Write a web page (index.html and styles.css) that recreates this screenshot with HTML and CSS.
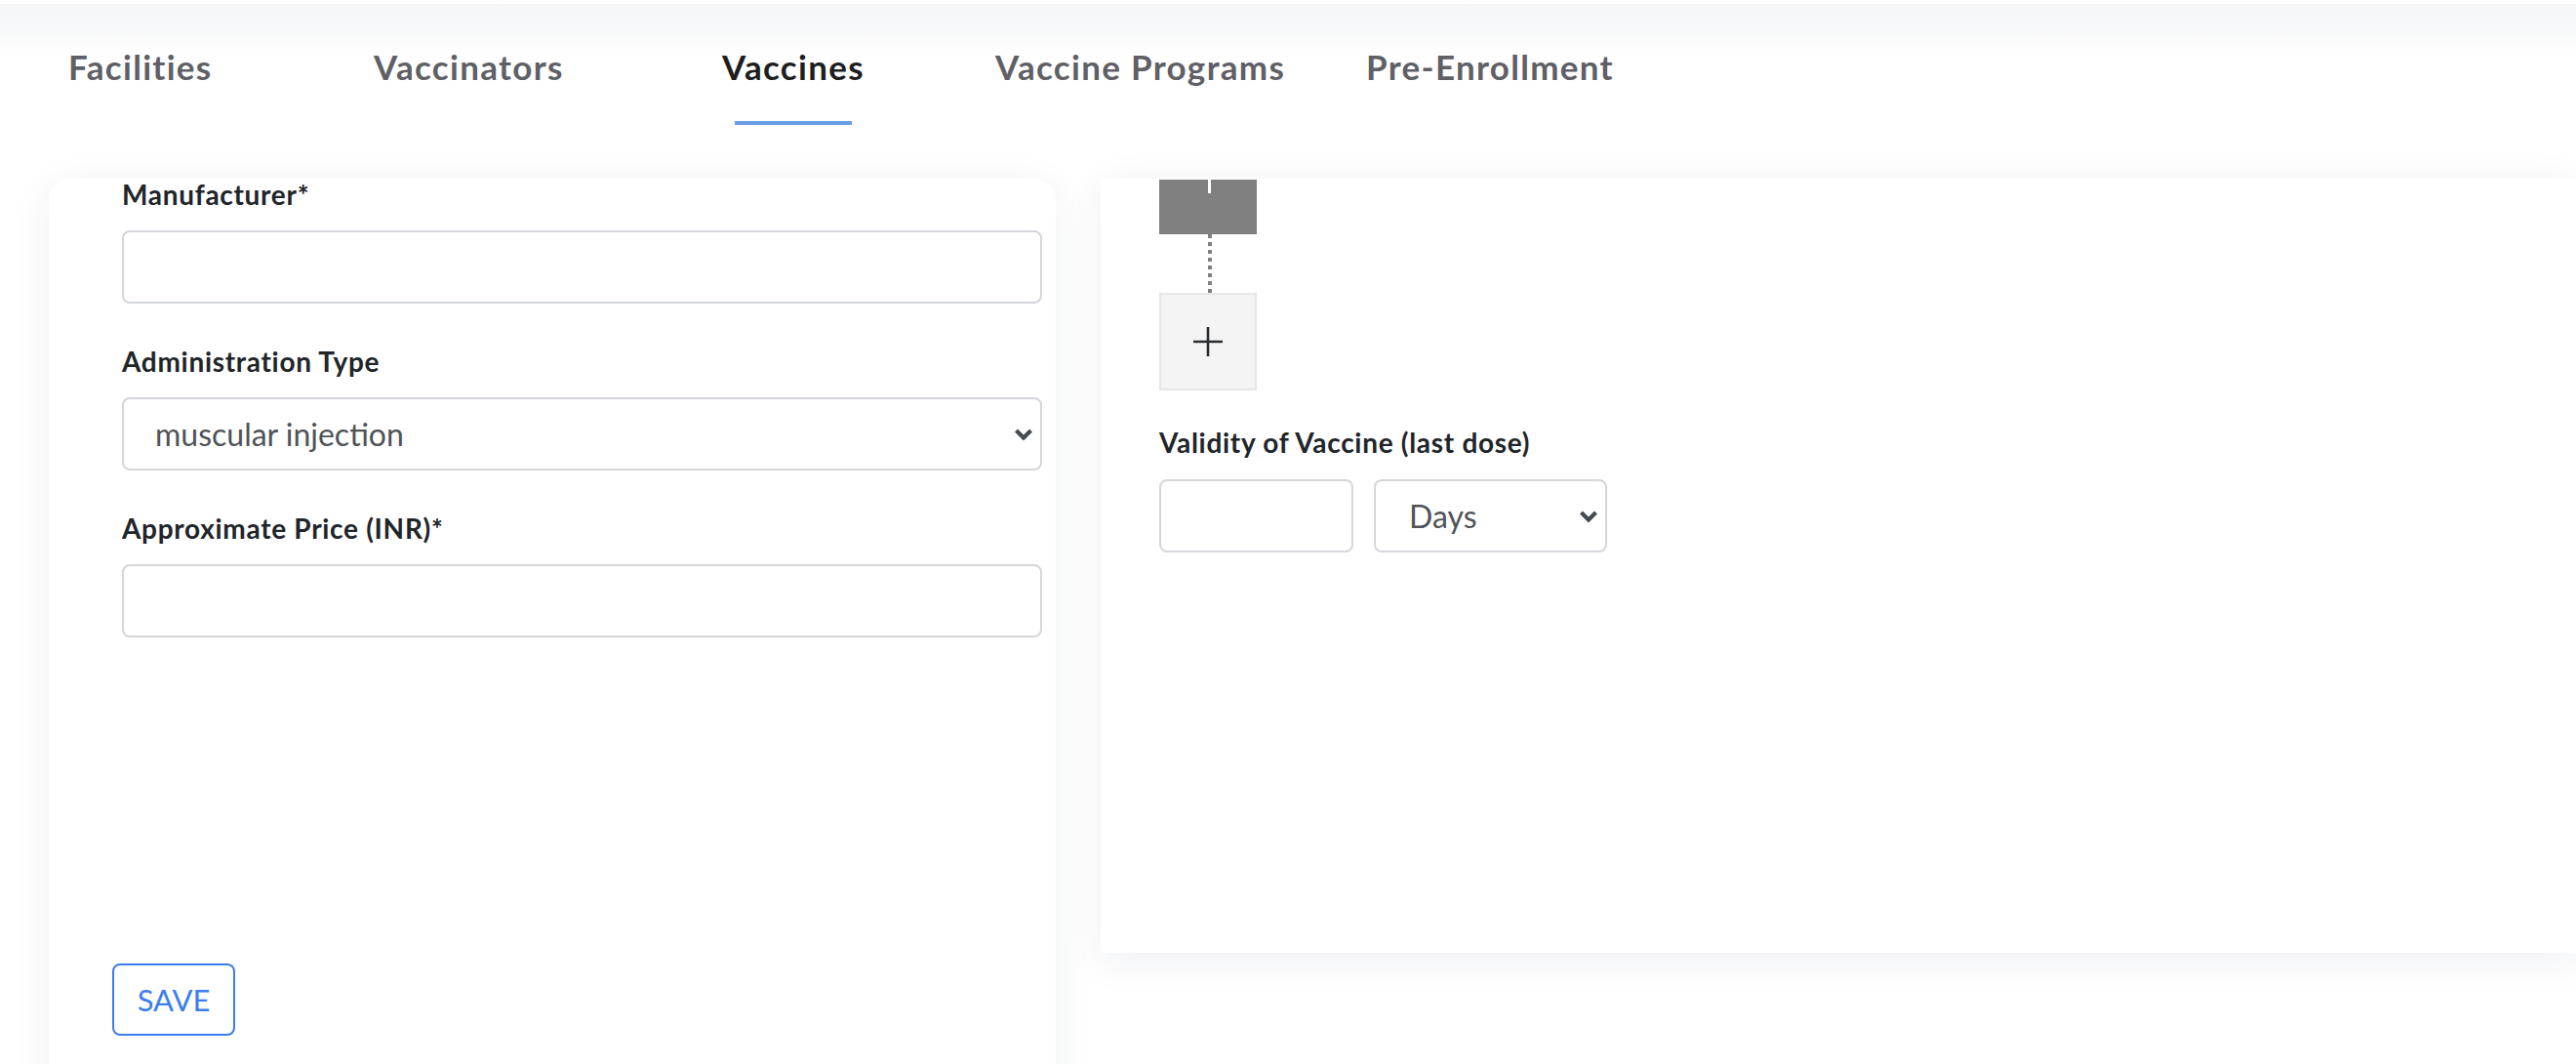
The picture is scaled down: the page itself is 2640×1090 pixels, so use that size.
FILE: index.html
```html
<!DOCTYPE html>
<html lang="en">
<head>
<meta charset="utf-8">
<title>Vaccines</title>
<link rel="stylesheet" href="styles.css">
</head>
<body>
<header class="topbar">
  <nav class="tabs">
    <a class="tab" href="#">Facilities</a>
    <a class="tab" href="#">Vaccinators</a>
    <a class="tab active" href="#">Vaccines</a>
    <a class="tab" href="#">Vaccine Programs</a>
    <a class="tab" href="#">Pre-Enrollment</a>
  </nav>
</header>
<main class="workspace">
  <section class="card form-card">
    <div class="field">
      <label class="field-label" for="manufacturer">Manufacturer*</label>
      <input class="control" id="manufacturer" type="text">
    </div>
    <div class="field">
      <label class="field-label" for="admin-type">Administration Type</label>
      <div class="select-wrap">
        <select class="control select" id="admin-type">
          <option>muscular injection</option>
        </select>
        <svg class="chevron" width="20" height="13" viewBox="0 0 20 13"><polyline points="2.5,2.5 10,10 17.5,2.5" fill="none" stroke="#454b52" stroke-width="4.2"/></svg>
      </div>
    </div>
    <div class="field">
      <label class="field-label" for="price">Approximate Price (INR)*</label>
      <input class="control" id="price" type="text">
    </div>
    <button class="save-btn" type="button">SAVE</button>
  </section>
  <section class="card dose-card">
    <div class="dose-track">
      <div class="dose-node"></div>
      <div class="dose-link"></div>
      <button class="dose-add" type="button" aria-label="Add dose">
        <svg width="32" height="32" viewBox="0 0 32 32"><path d="M16 1v30M1 16h30" stroke="#2a2c30" stroke-width="2.6" fill="none"/></svg>
      </button>
    </div>
    <div class="field validity">
      <label class="field-label" for="validity">Validity of Vaccine (last dose)</label>
      <div class="validity-row">
        <input class="control num-input" id="validity" type="text">
        <div class="select-wrap unit-wrap">
          <select class="control select unit-select">
            <option>Days</option>
          </select>
          <svg class="chevron" width="20" height="13" viewBox="0 0 20 13"><polyline points="2.5,2.5 10,10 17.5,2.5" fill="none" stroke="#454b52" stroke-width="4.2"/></svg>
        </div>
      </div>
    </div>
  </section>
</main>
</body>
</html>
```
FILE: styles.css
```css
html, body {
  margin: 0;
  padding: 0;
}

body {
  font-family: Lato, "Open Sans", Arial, sans-serif;
  font-variant-ligatures: none;
  color: #212529;
  background: #ffffff;
  overflow: hidden;
}

/* ---------- top navigation ---------- */
.topbar {
  height: 183px;
  box-sizing: border-box;
  padding: 47px 0 0 70px;
  background: linear-gradient(to bottom, #ffffff 0, #ffffff 4px, #f5f6f8 4px, #f8f9fa 30px, #fdfdfd 48px, #ffffff 64px);
}

.tabs {
  display: grid;
  grid-template-columns: 313px 357px 280px 380px auto;
  justify-items: start;
}

.tab {
  display: flex;
  flex-direction: column;
  align-items: center;
  font-size: 35px;
  font-weight: 700;
  line-height: 42px;
  letter-spacing: 1.3px;
  color: #5f6066;
  text-decoration: none;
}

.tab::after {
  content: "";
  width: 120px;
  height: 4px;
  margin-top: 35px;
}

.tab.active {
  color: #1d1e22;
}

.tab.active::after {
  background: #6b9ce9;
}

/* ---------- cards ---------- */
.workspace {
  display: flex;
  align-items: flex-start;
  gap: 46px;
  padding-left: 50px;
}

.card {
  background: #ffffff;
  box-shadow: 0 8px 40px rgba(30, 45, 80, 0.07);
  box-sizing: border-box;
}

.form-card {
  width: 1032px;
  height: 960px;
  flex: none;
  padding: 0 14px 0 65px;
  border-radius: 22px 22px 0 0;
}

.dose-card {
  flex: 1;
  height: 793px;
  padding: 1px 0 0 60px;
}

/* ---------- fields ---------- */
.field {
  margin: 0 0 43px 10px;
}

.field-label {
  display: block;
  font-size: 28px;
  font-weight: 700;
  line-height: 32px;
  letter-spacing: 0.7px;
  margin-bottom: 21px;
  color: #212529;
}

.control {
  display: block;
  width: 100%;
  height: 75px;
  box-sizing: border-box;
  border: 2px solid #d3d6da;
  border-radius: 8px;
  background: #ffffff;
  font-family: Lato, "Open Sans", Arial, sans-serif;
  font-size: 32px;
  font-weight: 400;
  color: #505357;
  padding: 0 32px;
  outline: none;
}

.select {
  appearance: none;
  -webkit-appearance: none;
}

.select-wrap {
  position: relative;
}

.chevron {
  position: absolute;
  right: 9px;
  top: 50%;
  transform: translateY(-50%);
  pointer-events: none;
}

/* ---------- save ---------- */
.save-btn {
  display: block;
  margin-top: 334px;
  width: 126px;
  height: 74px;
  box-sizing: border-box;
  border: 2px solid #3b7ded;
  border-radius: 8px;
  background: #ffffff;
  color: #3b7ded;
  font-family: Lato, "Open Sans", Arial, sans-serif;
  font-size: 31px;
  font-weight: 400;
  padding: 0;
}

/* ---------- dose track ---------- */
.dose-track {
  display: flex;
  flex-direction: column;
  align-items: center;
  width: 100px;
}

.dose-node {
  width: 100px;
  height: 56px;
  background: #808080;
  display: flex;
  justify-content: center;
}

.dose-node::before {
  content: "";
  width: 3px;
  height: 14px;
  margin-left: 3px;
  background: #ffffff;
}

.dose-link {
  width: 4px;
  height: 60px;
  margin-left: 4px;
  background: repeating-linear-gradient(to bottom, #808080 0, #808080 4px, transparent 4px, transparent 8px);
}

.dose-add {
  width: 100px;
  height: 100px;
  box-sizing: border-box;
  padding: 0;
  background: #f4f4f4;
  border: 2px solid #e6e6e6;
  display: flex;
  align-items: center;
  justify-content: center;
}

.validity {
  margin: 37px 0 0 0;
}

.validity .field-label {
  margin-bottom: 22px;
}

.validity-row {
  display: flex;
  gap: 21px;
}

.num-input {
  width: 199px;
}

.unit-wrap {
  width: 239px;
}

.unit-select {
  padding-left: 34px;
}
```
